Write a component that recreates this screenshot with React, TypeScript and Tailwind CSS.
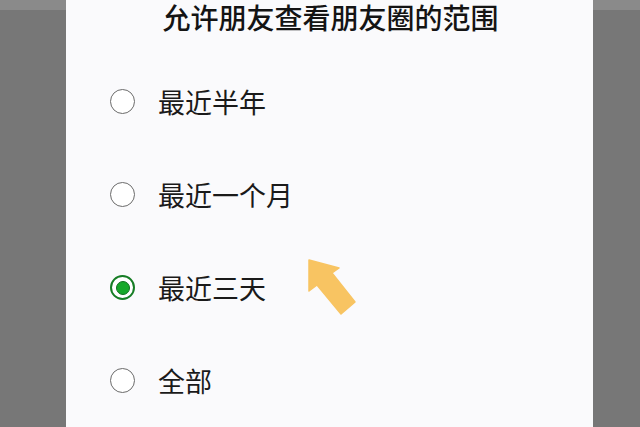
import React from "react";

const options = [
  { label: "最近半年", checked: false },
  { label: "最近一个月", checked: false },
  { label: "最近三天", checked: true },
  { label: "全部", checked: false },
];

function Radio({ checked }: { checked: boolean }) {
  if (checked) {
    return (
      <div className="w-[25px] h-[25px] rounded-full border-2 border-[#167d25] flex items-center justify-center bg-white">
        <div className="w-[14px] h-[14px] rounded-full bg-[#16a82a] border border-[#117020]" />
      </div>
    );
  }
  return <div className="w-[25px] h-[25px] rounded-full border-[1.5px] border-[#6b6b6b] bg-white" />;
}

function Arrow() {
  return (
    <svg
      className="absolute left-[300px] top-[255px]"
      width="64"
      height="64"
      viewBox="0 0 64 64"
    >
      <polygon
        points="9,5 39,13 32,18 55,47 41,59 17,30 9,36"
        fill="#f8c462"
        stroke="#f8c462"
        strokeWidth="1.5"
        strokeLinejoin="round"
      />
    </svg>
  );
}

function Side({ w }: { w: string }) {
  return (
    <div className={`${w} shrink-0 flex flex-col bg-[#777777]`}>
      <div className="h-[10px] bg-[#8a8a8a]" />
    </div>
  );
}

export default function App() {
  return (
    <div
      className="relative flex w-[640px] h-[427px] overflow-hidden bg-[#777777]"
      style={{ fontFamily: '"Noto Sans CJK SC", "Noto Sans", sans-serif' }}
    >
      <Side w="w-[66px]" />
      <div className="flex-1 bg-[#fafafc] flex flex-col">
        <div className="h-[34px] flex items-center justify-center pl-[2px]">
          <h1 className="text-[28px] leading-none font-medium text-[#141414]">
            允许朋友查看朋友圈的范围
          </h1>
        </div>
        <div className="flex flex-col pt-[22px]">
          {options.map((o) => (
            <div key={o.label} className="h-[93px] flex items-center pl-[44px]">
              <Radio checked={o.checked} />
              <span className="ml-[23px] text-[27px] leading-none text-[#1a1a1a]">{o.label}</span>
            </div>
          ))}
        </div>
      </div>
      <Side w="w-[47px]" />
      <Arrow />
    </div>
  );
}
